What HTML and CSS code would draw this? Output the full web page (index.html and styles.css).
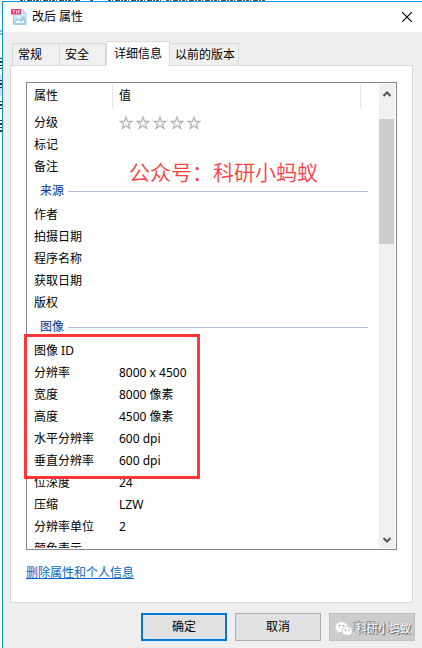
FILE: index.html
```html
<!DOCTYPE html>
<html lang="zh-CN">
<head>
  <meta charset="UTF-8">
  <meta name="viewport" content="width=device-width, initial-scale=1.0">
  <title>改后 属性</title>
  <link rel="stylesheet" href="styles.css">
</head>
<body>
  <div class="desktop">
    <svg class="desktop-top" width="270" height="1" aria-hidden="true">
      <path d="M20 .5H80M90 .5H94M108 .5H162M166 .5H266" stroke="#555" stroke-dasharray="3 1 1 2 5 1 2 1"/>
    </svg>
    <svg class="desktop-left" width="2" height="140" aria-hidden="true">
      <path d="M0 12.5H2" stroke="#d9d9d9"/>
      <path d="M1 30V36" stroke="#8fb4e0" stroke-width="2" stroke-dasharray="2 1"/>
      <path d="M0 75H2V96H0Z" fill="#d9d9d9"/>
      <path d="M1 58V69M1 80V90M1 101V109M1 120V132" stroke="#333" stroke-width="2" stroke-dasharray="1 2 2 2"/>
    </svg>
  </div>

  <div class="window">
    <div class="titlebar">
      <svg class="file-icon" width="16" height="16" viewBox="0 0 16 16" aria-hidden="true">
        <path d="M2.500 1H12L15 4V15.500H2.500Z" fill="#cfe6f5" stroke="#a9cbe2"/>
        <path d="M12 1V4H15Z" fill="#fff" stroke="#a9cbe2"/>
        <path d="M3 13L6 9L9 11L12 7L14.500 10V15H3Z" fill="#9ecbea"/>
        <circle cx="7" cy="8" r="1" fill="#fff"/>
        <path d="M4 13L7 11L10 13L13 11V14H5Z" fill="#fff"/>
        <path d="M0 0H10V5.500H0Z" fill="#e23a78"/>
        <path d="M1.500 1.500H4M2.700 1.500V4.500M5.500 1.500V4.500M7.200 4.500V1.500H9M7.200 3H8.600" stroke="#fff" stroke-width=".7" fill="none"/>
      </svg>
      <h1>改后 属性</h1>
      <button class="close" aria-label="关闭">
        <svg width="10" height="10" viewBox="0 0 10 10"><path d="M0 0L10 10M10 0L0 10" stroke="#000" stroke-width="1.1"/></svg>
      </button>
    </div>

    <div class="tabs" role="tablist">
      <button role="tab">常规</button>
      <button role="tab">安全</button>
      <button role="tab" class="active" aria-selected="true">详细信息</button>
      <button role="tab">以前的版本</button>
    </div>

    <div class="panel">
      <div class="list">
        <div class="content">
          <table>
            <colgroup><col class="name"><col></colgroup>
            <thead>
              <tr><th>属性</th><th>值</th></tr>
            </thead>
            <tbody>
              <tr>
                <td>分级</td>
                <td>
                  <svg class="stars" width="84" height="14" viewBox="0 0 84 14" role="img" aria-label="未分级">
                    <defs><path id="star" d="M7 1L8.600 5.300H13L9.500 8.100L10.800 12.500L7 9.900L3.200 12.500L4.500 8.100L1 5.300H5.400Z"/></defs>
                    <g fill="#f4f4f4" stroke="#b4b4b4" stroke-width="1.2">
                      <use href="#star"/><use href="#star" x="17"/><use href="#star" x="34"/><use href="#star" x="51"/><use href="#star" x="68"/>
                    </g>
                  </svg>
                </td>
              </tr>
              <tr><td>标记</td><td></td></tr>
              <tr><td>备注</td><td></td></tr>
              <tr class="group"><th colspan="2"><span>来源</span></th></tr>
              <tr><td>作者</td><td></td></tr>
              <tr><td>拍摄日期</td><td></td></tr>
              <tr><td>程序名称</td><td></td></tr>
              <tr><td>获取日期</td><td></td></tr>
              <tr><td>版权</td><td></td></tr>
              <tr class="group"><th colspan="2"><span>图像</span></th></tr>
              <tr><td>图像 ID</td><td></td></tr>
              <tr><td>分辨率</td><td>8000 x 4500</td></tr>
              <tr><td>宽度</td><td>8000 像素</td></tr>
              <tr><td>高度</td><td>4500 像素</td></tr>
              <tr><td>水平分辨率</td><td>600 dpi</td></tr>
              <tr><td>垂直分辨率</td><td>600 dpi</td></tr>
              <tr><td>位深度</td><td>24</td></tr>
              <tr><td>压缩</td><td>LZW</td></tr>
              <tr><td>分辨率单位</td><td>2</td></tr>
              <tr><td>颜色表示</td><td></td></tr>
            </tbody>
          </table>
        </div>
        <div class="scrollbar">
          <button aria-label="向上滚动"><svg width="8" height="6" viewBox="0 0 8 6"><path d="M.5 5L4 1.500L7.500 5" fill="none" stroke="#555" stroke-width="2"/></svg></button>
          <div class="thumb"></div>
          <button class="down" aria-label="向下滚动"><svg width="8" height="6" viewBox="0 0 8 6"><path d="M.5 1L4 4.500L7.500 1" fill="none" stroke="#555" stroke-width="2"/></svg></button>
        </div>
        <p class="account">公众号：科研小蚂蚁</p>
        <div class="highlight"></div>
      </div>
      <a class="remove" href="#">删除属性和个人信息</a>
    </div>

    <div class="actions">
      <button class="default">确定</button>
      <button>取消</button>
      <div class="apply">
        <button disabled>应用(A)</button>
        <div class="badge">
          <svg width="18" height="16" viewBox="0 0 18 16" aria-hidden="true">
            <path d="M6.500 1C3 1 .5 3.200 .5 6C.5 7.700 1.300 9 2.700 9.900L2.200 12L4.500 10.800C5.100 11 5.800 11 6.500 11C10 11 12.500 8.800 12.500 6S10 1 6.500 1Z" fill="#fff"/>
            <path d="M12 5.500C9 5.500 6.800 7.400 6.800 10S9 14.400 12 14.400L14 14.100L16 15.200L15.500 13.300C16.700 12.500 17.400 11.400 17.400 10C17.400 7.400 15 5.500 12 5.500Z" fill="#fff" stroke="#bbb" stroke-width=".7"/>
            <g fill="#888"><circle cx="4.500" cy="4.800" r=".8"/><circle cx="8.500" cy="4.800" r=".8"/><circle cx="10.300" cy="9" r=".7"/><circle cx="14" cy="9" r=".7"/></g>
          </svg>
          <span>科研小蚂蚁</span>
        </div>
      </div>
    </div>
  </div>
</body>
</html>
```
FILE: styles.css
```css
* {
  box-sizing: border-box;
}
body {
  margin: 0;
  height: 100vh;
  padding: 1px 0 0 2px;
  background-color: #fff;
  color: #000;
  font: 12px/16px "Noto Sans", "Noto Sans CJK SC", sans-serif;
}
button {
  padding: 0;
  font: inherit;
  color: inherit;
}
.desktop svg {
  position: absolute;
  top: 0;
  left: 0;
}
.window {
  display: flex;
  flex-direction: column;
  height: 100%;
  min-height: 400px;
  border-top: 1px solid #0096ec;
  border-left: 1px solid #0096ec;
  background-color: #efefef;
}

/* title bar */
.titlebar {
  display: flex;
  align-items: center;
  height: 30px;
  padding: 0 8px;
  background-color: #fff;
}
.titlebar h1 {
  flex: 1;
  margin: 0 0 0 5px;
  font-size: 12px;
  font-weight: normal;
}
.close {
  display: flex;
  padding: 2px;
  border: none;
  background: none;
}

/* tabs */
.tabs {
  display: flex;
  align-items: flex-end;
  padding: 9px 0 0 9px;
}
.tabs button {
  height: 22px;
  padding: 0 3px 0 5px;
  border: 1px solid #d9d9d9;
  border-bottom: none;
  border-left-width: 0;
  background-color: #f0f0f0;
  text-align: left;
}
.tabs button:first-child {
  width: 48px;
  border-left-width: 1px;
}
.tabs button:nth-child(2) {
  width: 46px;
}
.tabs button.active {
  height: 25px;
  margin-bottom: -1px;
  padding: 0 7px;
  border-left-width: 1px;
  background-color: #fff;
  z-index: 1;
}

/* details */
.panel {
  flex: 1;
  display: flex;
  flex-direction: column;
  align-items: flex-start;
  min-height: 0;
  margin: 0 9px 0 7px;
  padding: 16px 15px;
  border: 1px solid #d9d9d9;
  background-color: #fff;
}
.list {
  flex: 1;
  display: flex;
  position: relative;
  align-self: stretch;
  min-height: 0;
  padding: 1px;
  border: 1px solid #828790;
}
.content {
  flex: 1;
  overflow: hidden;
}
table {
  width: 100%;
  border-collapse: separate;
  border-spacing: 0;
  table-layout: fixed;
}
.name {
  width: 85px;
}
th, td {
  height: 22px;
  padding: 0 6px;
  font-weight: normal;
  text-align: left;
  white-space: nowrap;
}
thead th {
  height: 24px;
  border-right: 1px solid #e5e5e5;
}
thead th:last-child {
  background: linear-gradient(#e5e5e5, #e5e5e5) right 18px top / 1px 100% no-repeat;
  border-right: none;
}
thead::after {
  content: "";
  display: block;
  height: 4px;
}
.stars {
  display: block;
}
.group th {
  height: 26px;
  padding: 0 11px 0 12px;
}
.group span {
  display: flex;
  align-items: center;
  gap: 4px;
  color: #003399;
}
.group span::after {
  content: "";
  flex: 1;
  height: 1px;
  background-color: #b0bfde;
}
.scrollbar {
  display: flex;
  flex-direction: column;
  width: 16px;
  background-color: #f0f0f0;
}
.scrollbar button {
  height: 18px;
  border: none;
  background: none;
}
.scrollbar .down {
  margin-top: auto;
}
.thumb {
  height: 27%;
  margin: 17px 1px 0 0;
  background-color: #cdcdcd;
}
.account {
  position: absolute;
  top: 75px;
  left: 102px;
  margin: 0;
  color: #ff3b3b;
  font-size: 21px;
  font-weight: 350;
  line-height: 28px;
}
.highlight {
  position: absolute;
  top: 251px;
  left: -3px;
  width: 176px;
  height: 145px;
  border: 3px solid #ff3636;
}
.remove {
  margin: 15px 0 5px;
  color: #0066cc;
}

/* buttons */
.actions {
  display: flex;
  justify-content: flex-end;
  gap: 8px;
  padding: 10px 7px 7px;
}
.actions button {
  width: 86px;
  height: 28px;
  border: 1px solid #adadad;
  background-color: #e1e1e1;
}
.actions .default {
  border: 2px solid #0078d7;
}
.apply {
  position: relative;
}
.apply button {
  border-color: #bfbfbf;
  background-color: #ccc;
  color: #9a9a9a;
}
.badge {
  display: flex;
  position: absolute;
  top: 8px;
  left: 6px;
  gap: 3px;
  color: #fff;
  font-size: 11px;
  white-space: nowrap;
  text-shadow: 1px 1px 1px #444;
}
```
